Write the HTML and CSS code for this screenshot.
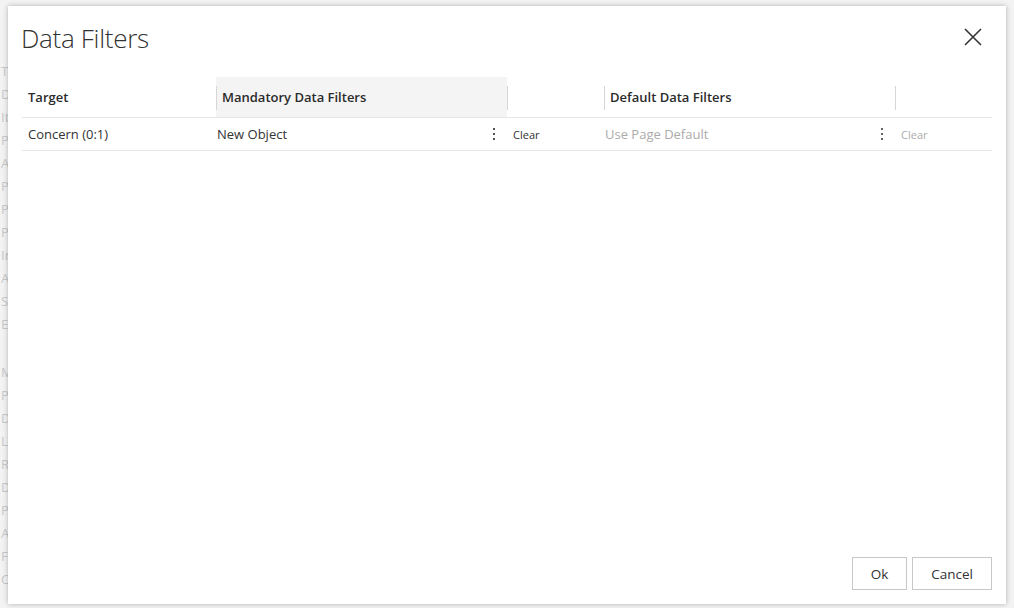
FILE: index.html
```html
<!DOCTYPE html>
<html>
<head>
<meta charset="utf-8">
<link rel="stylesheet" href="styles.css">
</head>
<body>
<div class="backdrop">
  <div class="bg-list">
    <div>Task</div><div>Data</div><div>Item</div><div>Port</div><div>Acct</div><div>Port</div><div>Pres</div><div>Poin</div><div>Ing</div><div>Acti</div><div>Set</div><div>Enr</div>
    <div class="gap"></div>
    <div>Mod</div><div>Pre</div><div>Del</div><div>Les</div><div>Rot</div><div>Doc</div><div>Pla</div><div>Acc</div><div>Fac</div><div>Cas</div>
  </div>
</div>

<div class="dialog">
  <div class="dialog-head">
    <h1 class="title">Data Filters</h1>
    <button class="close" aria-label="Close">
      <svg width="18" height="18" viewBox="0 0 18 18"><path d="M1 1 L17 17 M17 1 L1 17" stroke="#333" stroke-width="1.6" fill="none"/></svg>
    </button>
  </div>

  <div class="grid">
    <div class="hcell">Target</div>
    <div class="hcell hl sep">Mandatory Data Filters</div>
    <div class="hcell sep"></div>
    <div class="hcell sep">Default Data Filters</div>
    <div class="hcell sep"></div>

    <div class="cell">Concern (0:1)</div>
    <div class="cell val">
      <span>New Object</span>
      <span class="kebab"><i></i><i></i><i></i></span>
    </div>
    <div class="cell clear">Clear</div>
    <div class="cell val muted">
      <span>Use Page Default</span>
      <span class="kebab"><i></i><i></i><i></i></span>
    </div>
    <div class="cell clear muted">Clear</div>
  </div>

  <div class="spacer"></div>

  <div class="footer">
    <button class="btn ok">Ok</button>
    <button class="btn cancel">Cancel</button>
  </div>
</div>
</body>
</html>
```

FILE: styles.css
```css
html, body {
  margin: 0;
  padding: 0;
}
body {
  width: 1014px;
  height: 608px;
  overflow: hidden;
  background: #f3f3f3;
  font-family: "Open Sans", "Noto Sans", sans-serif;
  color: #333;
  position: relative;
}

.backdrop {
  height: 608px;
  padding-top: 60px;
  box-sizing: border-box;
}
.bg-list {
  margin-left: 1px;
  display: flex;
  flex-direction: column;
  font-size: 13px;
  line-height: 23px;
  color: #c9c9c9;
}
.bg-list .gap {
  height: 25px;
}

.dialog {
  position: absolute;
  left: 8px;
  top: 6px;
  width: 998px;
  height: 598px;
  background: #fff;
  box-shadow: 0 0 5px rgba(0, 0, 0, 0.28);
  box-sizing: border-box;
  padding: 0 14px 14px 14px;
  display: flex;
  flex-direction: column;
}

.dialog-head {
  display: flex;
  align-items: flex-start;
  justify-content: space-between;
  height: 71px;
  padding-top: 14px;
  box-sizing: border-box;
}
.title {
  margin: 0 0 0 -1px;
  font-weight: 300;
  font-size: 26px;
  line-height: 36px;
  color: #333;
  letter-spacing: -0.3px;
}
.close {
  border: 0;
  background: none;
  padding: 0;
  margin-right: 10px;
  margin-top: 8px;
  width: 18px;
  height: 18px;
  display: flex;
}

.grid {
  display: grid;
  grid-template-columns: 194px 291px 97px 291px 97px;
  grid-template-rows: 41px 33px;
}
.hcell {
  font-weight: 600;
  font-size: 13px;
  color: #2b2b2b;
  display: flex;
  align-items: center;
  padding-left: 6px;
  border-bottom: 1px solid #e6e6e6;
  position: relative;
}
.hcell.hl {
  background: #f4f4f4;
}
.hcell.sep::before {
  content: "";
  position: absolute;
  left: 0;
  top: 9px;
  bottom: 7px;
  border-left: 1px solid #d6d6d6;
}

.cell {
  font-size: 13px;
  color: #333;
  display: flex;
  align-items: center;
  padding-left: 6px;
  border-bottom: 1px solid #e6e6e6;
}
.cell.val {
  padding-left: 1px;
  justify-content: space-between;
}
.cell.muted {
  color: #ababab;
}
.cell.clear {
  font-size: 11px;
}
.kebab {
  display: flex;
  flex-direction: column;
  gap: 3px;
  margin-right: 12px;
  margin-top: -1px;
}
.kebab i {
  display: block;
  width: 2px;
  height: 2px;
  background: #555;
}
.muted .kebab i {
  background: #666;
}

.spacer {
  flex: 1;
}

.footer {
  display: flex;
  justify-content: flex-end;
  gap: 5px;
}
.btn {
  font-family: "Open Sans", "Noto Sans", sans-serif;
  font-size: 13.5px;
  color: #333;
  background: #fff;
  border: 1px solid #c8c8c8;
  height: 33px;
  padding: 0;
}
.btn.ok {
  width: 55px;
}
.btn.cancel {
  width: 80px;
}
```
